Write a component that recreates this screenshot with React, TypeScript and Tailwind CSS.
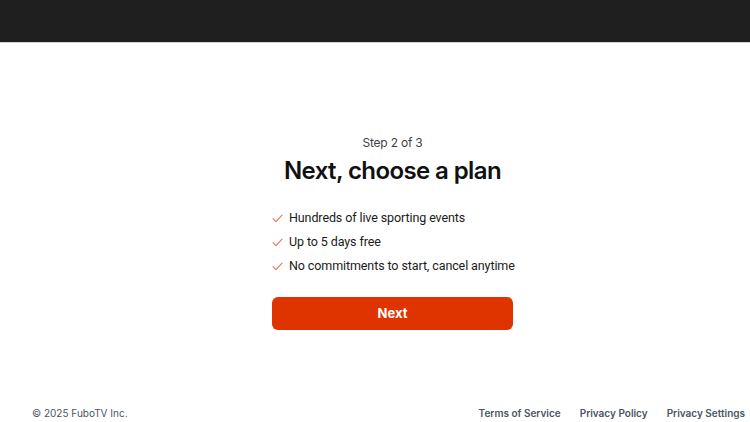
import React from "react";

function Check() {
  return (
    <svg width="11" height="9" viewBox="0 0 11 9" fill="none" className="shrink-0">
      <path d="M1 4.6 L4 7.6 L10 1.2" stroke="#ec7a5c" strokeWidth="1.2" strokeLinecap="round" strokeLinejoin="round" />
    </svg>
  );
}

export default function App() {
  const items = [
    "Hundreds of live sporting events",
    "Up to 5 days free",
    "No commitments to start, cancel anytime",
  ];
  return (
    <div className="h-[422px] w-[750px] overflow-hidden bg-white flex flex-col" style={{ fontFamily: "Inter, 'Noto Sans', sans-serif" }}>
      <header className="h-[43px] shrink-0 bg-[#1f1f1f] border-b border-[#cfcfcf]" />
      <main className="flex-1 flex flex-col items-center pt-[92px] pl-[35px]">
        <div className="w-[241px] flex flex-col">
          <p className="text-center text-[12px] leading-[16px] text-[#3f3f46] tracking-[-0.2px]">Step 2 of 3</p>
          <h1 className="mt-[5px] text-center text-[24px] leading-[30px] font-semibold text-[#111111] tracking-[-0.6px] whitespace-nowrap -mx-[20px]">Next, choose a plan</h1>
          <ul className="mt-[24px] flex flex-col gap-[8px]" style={{ fontFamily: "Roboto, 'Noto Sans', sans-serif" }}>
            {items.map((t) => (
              <li key={t} className="flex items-center gap-[6px] h-[16px] text-[12.5px] leading-[16px] text-[#1a1a1a] whitespace-nowrap tracking-[-0.1px]">
                <Check />
                <span>{t}</span>
              </li>
            ))}
          </ul>
          <button className="mt-[23px] h-[33px] w-full rounded-[6px] bg-[#e03400] text-white text-[13px] font-bold">Next</button>
        </div>
      </main>
      <footer className="h-[17px] shrink-0 flex items-start justify-between pl-[32px] pr-[5px] text-[10px] leading-[16px] text-[#4b5563]">
        <span>© 2025 FuboTV Inc.</span>
        <div className="flex gap-[19px] font-semibold">
          <span>Terms of Service</span>
          <span>Privacy Policy</span>
          <span>Privacy Settings</span>
        </div>
      </footer>
    </div>
  );
}
